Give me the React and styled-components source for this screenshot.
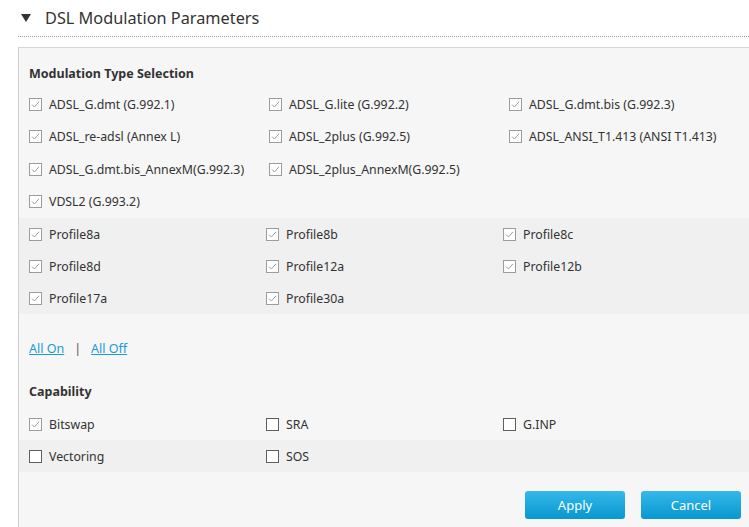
import React from 'react';
import styled, { createGlobalStyle } from 'styled-components';

const GlobalStyle = createGlobalStyle`
  html, body {
    margin: 0;
    padding: 0;
    background: #ffffff;
  }
  body {
    font-family: "Noto Sans", "Open Sans", sans-serif;
    color: #333333;
  }
`;

const Page = styled.div`
  width: 749px;
  height: 527px;
  overflow: hidden;
`;

const Header = styled.div`
  display: flex;
  align-items: center;
  height: 37px;
  margin-left: 18px;
  border-bottom: 1px dotted #9a9a9a;
  box-sizing: border-box;
`;

const Arrow = styled.span`
  width: 0;
  height: 0;
  margin-left: 3px;
  margin-right: 14px;
  border-left: 5px solid transparent;
  border-right: 5px solid transparent;
  border-top: 8px solid #333333;
`;

const Title = styled.h2`
  margin: 0;
  font-size: 16.3px;
  font-weight: 400;
  color: #333333;
  line-height: 38px;
`;

const Panel = styled.div`
  margin: 10px 0 0 18px;
  border-left: 1px solid #cfcfcf;
  border-top: 1px solid #d6d6d6;
  background: #f6f6f6;
  height: 480px;
`;

const SectionTitle = styled.div`
  padding: ${(p) => p.$top}px 0 ${(p) => p.$bottom}px 10px;
  font-size: 12.5px;
  font-weight: 700;
  line-height: 20px;
  color: #333333;
`;

const Grid = styled.div`
  display: grid;
  grid-template-columns: repeat(3, ${(p) => p.$col}px);
  padding-left: 10px;
  background: ${(p) => (p.$shaded ? '#f0f0f0' : 'transparent')};
`;

const Cell = styled.label`
  display: flex;
  align-items: center;
  height: ${(p) => p.$h}px;
  font-size: 12.3px;
  color: #333333;
  white-space: nowrap;
`;

const Box = styled.span`
  display: inline-flex;
  width: 13px;
  height: 13px;
  margin-right: 7px;
  flex-shrink: 0;
`;

const Links = styled.div`
  display: flex;
  align-items: center;
  gap: 10px;
  margin-top: 25px;
  padding-left: 10px;
  line-height: 20px;
  font-size: 12.5px;
`;

const Link = styled.a`
  color: #1c9bd6;
  text-decoration: underline;
  cursor: pointer;
`;

const Sep = styled.span`
  color: #555555;
`;

const Actions = styled.div`
  display: flex;
  justify-content: flex-end;
  gap: 16px;
  margin-top: 19px;
  padding-right: 8px;
`;

const Button = styled.button`
  width: 100px;
  height: 28px;
  border: none;
  border-radius: 3px;
  background: linear-gradient(#34b9ea, #0897cf);
  color: #ffffff;
  font-family: "Noto Sans", "Open Sans", sans-serif;
  font-size: 13px;
  cursor: pointer;
`;

const CheckIcon = ({ checked }) => (
  <Box>
    <svg width="13" height="13" viewBox="0 0 13 13">
      <rect
        x="0.5"
        y="0.5"
        width="12"
        height="12"
        fill="#ffffff"
        stroke={checked ? '#9c9c9c' : '#5f5f5f'}
      />
      {checked && (
        <path d="M3 6.6 L5.4 9 L10 3.8" fill="none" stroke="#9c9c9c" strokeWidth="1" />
      )}
    </svg>
  </Box>
);

const Option = ({ label, checked = true, h }) => (
  <Cell $h={h}>
    <CheckIcon checked={checked} />
    {label}
  </Cell>
);

const modulation = [
  'ADSL_G.dmt (G.992.1)',
  'ADSL_G.lite (G.992.2)',
  'ADSL_G.dmt.bis (G.992.3)',
  'ADSL_re-adsl (Annex L)',
  'ADSL_2plus (G.992.5)',
  'ADSL_ANSI_T1.413 (ANSI T1.413)',
  'ADSL_G.dmt.bis_AnnexM(G.992.3)',
  'ADSL_2plus_AnnexM(G.992.5)',
  null,
  'VDSL2 (G.993.2)',
];

const profiles = [
  'Profile8a',
  'Profile8b',
  'Profile8c',
  'Profile8d',
  'Profile12a',
  'Profile12b',
  'Profile17a',
  'Profile30a',
];

const App = () => (
  <Page>
    <GlobalStyle />
    <Header>
      <Arrow />
      <Title>DSL Modulation Parameters</Title>
    </Header>
    <Panel>
      <SectionTitle $top={16} $bottom={4}>Modulation Type Selection</SectionTitle>
      <Grid $col={240}>
        {modulation.map((m, i) =>
          m ? <Option key={i} label={m} h={32.5} /> : <div key={i} />
        )}
      </Grid>
      <Grid $col={237} $shaded>
        {profiles.map((p) => (
          <Option key={p} label={p} h={32} />
        ))}
      </Grid>
      <Links>
        <Link>All On</Link>
        <Sep>|</Sep>
        <Link>All Off</Link>
      </Links>
      <SectionTitle $top={23} $bottom={6}>Capability</SectionTitle>
      <Grid $col={237}>
        <Option label="Bitswap" h={32} />
        <Option label="SRA" checked={false} h={32} />
        <Option label="G.INP" checked={false} h={32} />
      </Grid>
      <Grid $col={237} $shaded>
        <Option label="Vectoring" checked={false} h={32} />
        <Option label="SOS" checked={false} h={32} />
      </Grid>
      <Actions>
        <Button>Apply</Button>
        <Button>Cancel</Button>
      </Actions>
    </Panel>
  </Page>
);

export default App;
